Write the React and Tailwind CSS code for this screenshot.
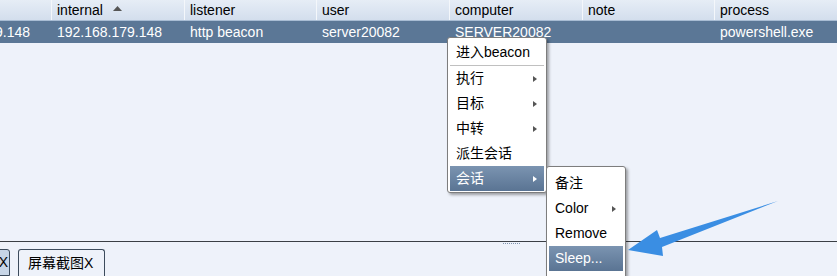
import React from "react";

const cols = [
  { w: 51, label: "" },
  { w: 133, label: "internal", sort: true },
  { w: 132, label: "listener" },
  { w: 133, label: "user" },
  { w: 133, label: "computer" },
  { w: 132, label: "note" },
  { w: 123, label: "process" },
];
const row = ["9.148", "192.168.179.148", "http beacon", "server20082", "SERVER20082", "", "powershell.exe"];

const font = { fontFamily: '"Liberation Sans", Arial, "Noto Sans CJK SC", sans-serif' };

function Arrow() {
  return (
    <svg width="6" height="8" viewBox="0 0 6 8" className="shrink-0">
      <path d="M1 1 L5 4 L1 7 Z" fill="currentColor" />
    </svg>
  );
}

function MenuItem({ label, sub, active }) {
  return (
    <div
      className={`mx-[2px] h-[25px] flex items-center justify-between pl-[6px] pr-[6px] text-[14px] ${
        active ? "bg-gradient-to-b from-[#7b94b1] to-[#5a7493] text-white" : "text-black"
      }`}
    >
      <span>{label}</span>
      {sub && <span className={active ? "text-white" : "text-[#555]"}><Arrow /></span>}
    </div>
  );
}

export default function App() {
  return (
    <div className="w-[837px] h-[276px] bg-[#eef2fa] relative overflow-hidden flex flex-col" style={font}>
      {/* header */}
      <div className="flex h-[21px] bg-gradient-to-b from-[#e6edf6] to-[#d3deed] border-b border-[#a8bcd3]">
        {cols.map((c, i) => (
          <div
            key={i}
            style={{ width: c.w }}
            className={`shrink-0 flex items-center pl-[5px] text-[14px] text-black ${i > 0 ? "border-l border-[#f4f7fb]" : ""}`}
          >
            {c.label}
            {c.sort && (
              <svg width="9" height="6" viewBox="0 0 9 6" className="ml-[10px] mb-[2px]">
                <path d="M0 5 L4.5 0 L9 5 Z" fill="#555" />
              </svg>
            )}
          </div>
        ))}
      </div>
      {/* row */}
      <div className="flex h-[22px] bg-[#5b7796]">
        {cols.map((c, i) => (
          <div
            key={i}
            style={{ width: c.w }}
            className={`shrink-0 flex items-center text-[14px] text-white ${i === 0 ? "justify-end pr-[21px]" : "pl-[6px]"}`}
          >
            {row[i]}
          </div>
        ))}
      </div>
      {/* body */}
      <div className="flex-1" />
      {/* splitter */}
      <div className="h-[1px] bg-[#3b3f45]" />
      <div className="h-[7px] relative">
        <div className="absolute left-[503px] top-[1px] w-[17px] h-[2px] border-t border-dotted border-[#7f93ad]" />
      </div>
      {/* tabs */}
      <div className="flex items-end h-[27px] gap-[8px]">
        <div className="h-[27px] w-[11px] -ml-[1px] bg-[#c8d6e7] border border-[#3c4b5c] rounded-tr-[3px] flex items-center justify-end pr-[1px] text-[14px] text-black">
          X
        </div>
        <div className="h-[27px] w-[87px] bg-[#eef2fa] border border-b-0 border-[#3c4b5c] rounded-t-[3px] flex items-center pl-[9px] text-[14px] text-black">
          屏幕截图X
        </div>
      </div>

      {/* context menu */}
      <div className="absolute left-[447px] top-[37px] w-[100px] h-[156px] bg-white border border-[#7d7d7d] rounded-[3px] shadow-[2px_2px_3px_rgba(0,0,0,0.35)] pt-[2px]">
        <MenuItem label="进入beacon" />
        <div className="mx-[2px] h-[1px] bg-[#c0c0c0] my-[0px]" />
        <MenuItem label="执行" sub />
        <MenuItem label="目标" sub />
        <MenuItem label="中转" sub />
        <MenuItem label="派生会话" />
        <MenuItem label="会话" sub active />
      </div>

      {/* submenu */}
      <div className="absolute left-[546px] top-[166px] w-[80px] h-[130px] bg-white border border-[#7d7d7d] rounded-[3px] shadow-[2px_2px_3px_rgba(0,0,0,0.35)] pt-[4px]">
        <MenuItem label="备注" />
        <MenuItem label="Color" sub />
        <MenuItem label="Remove" />
        <MenuItem label="Sleep..." active />
      </div>

      {/* annotation arrow */}
      <svg className="absolute left-0 top-0 pointer-events-none" width="837" height="276">
        <polygon points="778,201 660,238 657,230 628,250 663,256 662,247" fill="#3a8ee3" />
      </svg>
    </div>
  );
}
